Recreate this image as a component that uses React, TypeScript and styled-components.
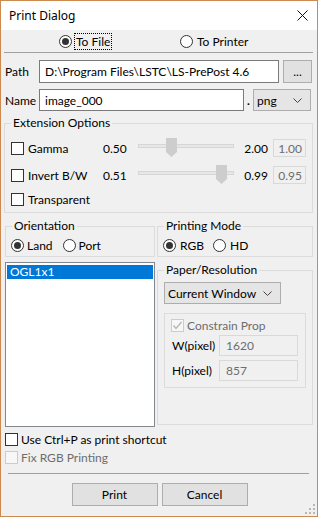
import React from "react";
import styled, { createGlobalStyle } from "styled-components";

const Global = createGlobalStyle`
  html, body { margin: 0; padding: 0; background: #ffffff; }
  body { font-family: "Lato", "Noto Sans", sans-serif; font-size: 12px; color: #000; }
  * { box-sizing: border-box; }
`;

const Window = styled.div`
  width: 318px;
  height: 517px;
  border: 1px solid #cd8a4f;
  background: #f0f0f0;
  display: flex;
  flex-direction: column;
  position: relative;
  overflow: hidden;
`;

const TitleBar = styled.div`
  height: 29px;
  flex: none;
  background: #ffffff;
  display: flex;
  align-items: center;
  justify-content: space-between;
  padding: 0 9px 0 8px;
  font-family: "Noto Sans", sans-serif;
  font-size: 12px;
`;

const Body = styled.div`
  flex: 1;
  display: flex;
  flex-direction: column;
  padding: 0 4px 0 3px;
`;

const TargetRow = styled.div`
  height: 22px;
  display: grid;
  grid-template-columns: 121px auto;
  align-items: center;
  padding-left: 55px;
`;

const Separator = styled.div<{ $inset?: number; $mt?: number }>`
  height: 1px;
  background: #a0a0a0;
  margin: ${(p) => p.$mt ?? 0}px ${(p) => p.$inset ?? 0}px 0;
  flex: none;
`;

const FieldRow = styled.div<{ $cols: string; $h: number; $mt: number }>`
  display: grid;
  grid-template-columns: ${(p) => p.$cols};
  height: ${(p) => p.$h}px;
  margin-top: ${(p) => p.$mt}px;
  align-items: stretch;
`;

const FieldLabel = styled.span`
  display: flex;
  align-items: center;
  padding-left: 1px;
`;

const Dot = styled.span`
  display: flex;
  align-items: center;
  justify-content: center;
  font-weight: bold;
`;

const TextBox = styled.div`
  border: 1px solid #7a7a7a;
  background: #ffffff;
  display: flex;
  align-items: center;
  padding-left: 5px;
  white-space: nowrap;
  overflow: hidden;
`;

const PushButton = styled.div<{ $w?: number }>`
  ${(p) => (p.$w ? `width: ${p.$w}px;` : "")}
  border: 1px solid #adadad;
  background: #e1e1e1;
  display: flex;
  align-items: center;
  justify-content: center;
`;

const Combo = styled.div<{ $w?: number; $h?: number; $mt?: number }>`
  ${(p) => (p.$w ? `width: ${p.$w}px;` : "")}
  ${(p) => (p.$h ? `height: ${p.$h}px;` : "")}
  margin-top: ${(p) => p.$mt ?? 0}px;
  border: 1px solid #adadad;
  background: #e5e5e5;
  display: flex;
  align-items: center;
  justify-content: space-between;
  padding: 0 8px 0 3px;
`;

const Group = styled.fieldset<{ $mt?: number; $h?: number; $pt?: number; $pb?: number; $pl?: number }>`
  margin: ${(p) => p.$mt ?? 0}px 0 0 0;
  padding: ${(p) => p.$pt ?? 0}px 0 ${(p) => p.$pb ?? 0}px ${(p) => p.$pl ?? 0}px;
  border: 1px solid #dcdcdc;
  min-width: 0;
  ${(p) => (p.$h ? `height: ${p.$h}px;` : "")}
`;

const Legend = styled.legend`
  margin-left: 6px;
  padding: 0 2px;
  line-height: 16px;
  font-size: 12px;
`;

const ExtGrid = styled.div`
  display: grid;
  grid-template-columns: 92px 35px 96px 39px 33px;
  padding-left: 6px;
`;

const ExtRow = styled.div<{ $mt: number }>`
  display: contents;
  & > * {
    margin-top: ${(p) => p.$mt}px;
  }
`;

const Cell = styled.div`
  height: 20px;
  display: flex;
  align-items: center;
  white-space: nowrap;
`;

const ValueRight = styled(Cell)`
  justify-content: flex-end;
  padding-right: 5px;
`;

const SmallBox = styled.div`
  height: 18px;
  width: 33px;
  border: 1px solid #d9d9d9;
  background: #f0f0f0;
  color: #6d6d6d;
  display: flex;
  align-items: center;
  justify-content: flex-end;
  padding-right: 3px;
  align-self: center;
`;

const Slider = styled.div`
  position: relative;
  height: 20px;
`;

const Track = styled.div`
  position: absolute;
  left: 0;
  right: 0;
  top: 6px;
  height: 4px;
  background: #e7e7e7;
  border: 1px solid #d6d6d6;
`;

const Thumb = styled.svg`
  position: absolute;
  top: 0;
`;

const Check = styled.span<{ $disabled?: boolean }>`
  width: 13px;
  height: 13px;
  flex: none;
  border: 1px solid ${(p) => (p.$disabled ? "#cccccc" : "#333333")};
  background: ${(p) => (p.$disabled ? "#f7f7f7" : "#ffffff")};
  display: inline-flex;
  align-items: center;
  justify-content: center;
`;

const Option = styled.label<{ $gap?: number; $disabled?: boolean; $h?: number }>`
  display: flex;
  align-items: center;
  gap: ${(p) => p.$gap ?? 3}px;
  white-space: nowrap;
  color: ${(p) => (p.$disabled ? "#6d6d6d" : "#000")};
  ${(p) => (p.$h ? `height: ${p.$h}px;` : "")}
`;

const RadioCircle = styled.span<{ $on?: boolean }>`
  width: 13px;
  height: 13px;
  flex: none;
  border-radius: 50%;
  border: 1px solid #333333;
  background: #ffffff;
  display: inline-flex;
  align-items: center;
  justify-content: center;
  &::after {
    content: "";
    width: 7px;
    height: 7px;
    border-radius: 50%;
    background: ${(p) => (p.$on ? "#333333" : "transparent")};
  }
`;

const Focus = styled.span`
  outline: 1px dotted #000;
  outline-offset: 0px;
  padding: 0 1px;
`;

const OptionsRow = styled.div<{ $gap: number }>`
  display: flex;
  align-items: center;
  gap: ${(p) => p.$gap}px;
  height: 20px;
  margin-top: 1px;
  padding-left: 5px;
`;

const TwoCol = styled.div<{ $mt: number; $h?: number }>`
  display: grid;
  grid-template-columns: 150px 156px;
  column-gap: 2px;
  padding-left: 1px;
  margin-top: ${(p) => p.$mt}px;
  ${(p) => (p.$h ? `height: ${p.$h}px;` : "")}
`;

const ListBox = styled.div`
  border: 1px solid #828790;
  background: #ffffff;
  padding: 2px 1px;
`;

const ListItem = styled.div<{ $selected?: boolean }>`
  height: 14px;
  line-height: 14px;
  padding-left: 3px;
  background: ${(p) => (p.$selected ? "#0078d7" : "transparent")};
  color: ${(p) => (p.$selected ? "#ffffff" : "#000")};
`;

const PaperInner = styled.div`
  display: flex;
  flex-direction: column;
  padding-left: 6px;
`;

const SubGroup = styled.div`
  margin-top: 9px;
  width: 142px;
  height: 75px;
  border: 1px solid #dcdcdc;
  padding: 3px 0 0 6px;
  display: flex;
  flex-direction: column;
`;

const PixelRow = styled.div<{ $mt: number }>`
  display: grid;
  grid-template-columns: 48px 79px;
  height: 21px;
  margin-top: ${(p) => p.$mt}px;
  align-items: stretch;
`;

const DisabledBox = styled.div`
  border: 1px solid #d9d9d9;
  background: #f0f0f0;
  color: #6d6d6d;
  display: flex;
  align-items: center;
  padding-left: 6px;
`;

const BottomOptions = styled.div`
  display: flex;
  flex-direction: column;
  margin-top: 3px;
  padding-left: 1px;
`;

const ButtonRow = styled.div`
  display: flex;
  justify-content: center;
  gap: 4px;
  margin-top: 9px;
  height: 23px;
  padding-left: 2px;
`;

const Grip = styled.svg`
  position: absolute;
  right: 2px;
  bottom: 2px;
`;

const Chevron = () => (
  <svg width="9" height="5" viewBox="0 0 9 5">
    <polyline points="0.5,0.5 4.5,4.5 8.5,0.5" fill="none" stroke="#444" strokeWidth="1" />
  </svg>
);

const CheckBox = ({ checked, disabled }: { checked?: boolean; disabled?: boolean }) => (
  <Check $disabled={disabled}>
    {checked && (
      <svg width="11" height="11" viewBox="0 0 11 11">
        <polyline points="1.5,5.5 4,8.5 9.5,2" fill="none" stroke={disabled ? "#b5b5b5" : "#000"} strokeWidth="1.3" />
      </svg>
    )}
  </Check>
);

const SliderCtl = ({ min, max, value }: { min: number; max: number; value: number }) => {
  const frac = (value - min) / (max - min);
  const left = Math.round(frac * (96 - 11));
  return (
    <Slider>
      <Track />
      <Thumb width="11" height="19" viewBox="0 0 11 19" style={{ left }}>
        <polygon points="0,0 11,0 11,14 5.5,19 0,14" fill="#cdcdcd" />
      </Thumb>
    </Slider>
  );
};

export default function App() {
  return (
    <>
      <Global />
      <Window>
        <TitleBar>
          <span>Print Dialog</span>
          <svg width="11" height="11" viewBox="0 0 11 11">
            <path d="M0.5 0.5 L10.5 10.5 M10.5 0.5 L0.5 10.5" stroke="#111" strokeWidth="1" />
          </svg>
        </TitleBar>
        <Body>
          <TargetRow>
            <Option $gap={3}>
              <RadioCircle $on />
              <Focus>To File</Focus>
            </Option>
            <Option $gap={4}>
              <RadioCircle />
              <span>To Printer</span>
            </Option>
          </TargetRow>
          <Separator />
          <FieldRow $cols="35px 240px 4px 29px" $h={23} $mt={7}>
            <FieldLabel>Path</FieldLabel>
            <TextBox>D:\Program Files\LSTC\LS-PrePost 4.6</TextBox>
            <span />
            <PushButton>...</PushButton>
          </FieldRow>
          <FieldRow $cols="35px 205px 9px 58px" $h={22} $mt={6}>
            <FieldLabel>Name</FieldLabel>
            <TextBox>image_000</TextBox>
            <Dot>.</Dot>
            <Combo>
              <span>png</span>
              <Chevron />
            </Combo>
          </FieldRow>

          <Group $mt={4} $pt={7} $pb={3}>
            <Legend>Extension Options</Legend>
            <ExtGrid>
              <ExtRow $mt={0}>
                <Cell>
                  <Option $gap={4}>
                    <CheckBox />
                    <span>Gamma</span>
                  </Option>
                </Cell>
                <Cell>0.50</Cell>
                <SliderCtl min={0.5} max={2.0} value={1.0} />
                <ValueRight>2.00</ValueRight>
                <SmallBox>1.00</SmallBox>
              </ExtRow>
              <ExtRow $mt={7}>
                <Cell>
                  <Option $gap={4}>
                    <CheckBox />
                    <span>Invert B/W</span>
                  </Option>
                </Cell>
                <Cell>0.51</Cell>
                <SliderCtl min={0.51} max={0.99} value={0.95} />
                <ValueRight>0.99</ValueRight>
                <SmallBox>0.95</SmallBox>
              </ExtRow>
              <ExtRow $mt={4}>
                <Cell>
                  <Option $gap={4}>
                    <CheckBox />
                    <span>Transparent</span>
                  </Option>
                </Cell>
              </ExtRow>
            </ExtGrid>
          </Group>

          <TwoCol $mt={5}>
            <Group $pb={1}>
              <Legend>Orientation</Legend>
              <OptionsRow $gap={10}>
                <Option>
                  <RadioCircle $on />
                  <span>Land</span>
                </Option>
                <Option>
                  <RadioCircle />
                  <span>Port</span>
                </Option>
              </OptionsRow>
            </Group>
            <Group $pb={1}>
              <Legend>Printing Mode</Legend>
              <OptionsRow $gap={9}>
                <Option $gap={4}>
                  <RadioCircle $on />
                  <span>RGB</span>
                </Option>
                <Option $gap={4}>
                  <RadioCircle />
                  <span>HD</span>
                </Option>
              </OptionsRow>
            </Group>
          </TwoCol>

          <TwoCol $mt={5} $h={165}>
            <ListBox>
              <ListItem $selected>OGL1x1</ListItem>
            </ListBox>
            <Group $h={163}>
              <Legend>Paper/Resolution</Legend>
              <PaperInner>
                <Combo $w={117} $h={22} $mt={4}>
                  <span>Current Window</span>
                  <Chevron />
                </Combo>
                <SubGroup>
                  <Option $gap={3} $disabled $h={17}>
                    <CheckBox checked disabled />
                    <span>Constrain Prop</span>
                  </Option>
                  <PixelRow $mt={1}>
                    <FieldLabel>W(pixel)</FieldLabel>
                    <DisabledBox>1620</DisabledBox>
                  </PixelRow>
                  <PixelRow $mt={4}>
                    <FieldLabel>H(pixel)</FieldLabel>
                    <DisabledBox>857</DisabledBox>
                  </PixelRow>
                </SubGroup>
              </PaperInner>
            </Group>
          </TwoCol>

          <BottomOptions>
            <Option $gap={3} $h={18}>
              <CheckBox />
              <span>Use Ctrl+P as print shortcut</span>
            </Option>
            <Option $gap={3} $h={18} $disabled>
              <CheckBox disabled />
              <span>Fix RGB Printing</span>
            </Option>
          </BottomOptions>
          <Separator $inset={4} $mt={7} />
          <ButtonRow>
            <PushButton $w={86}>Print</PushButton>
            <PushButton $w={86}>Cancel</PushButton>
          </ButtonRow>
        </Body>
        <Grip width="10" height="10" viewBox="0 0 10 10">
          <g fill="#b8b8b8">
            <rect x="8" y="0" width="2" height="2" />
            <rect x="4" y="4" width="2" height="2" />
            <rect x="8" y="4" width="2" height="2" />
            <rect x="0" y="8" width="2" height="2" />
            <rect x="4" y="8" width="2" height="2" />
            <rect x="8" y="8" width="2" height="2" />
          </g>
        </Grip>
      </Window>
    </>
  );
}
